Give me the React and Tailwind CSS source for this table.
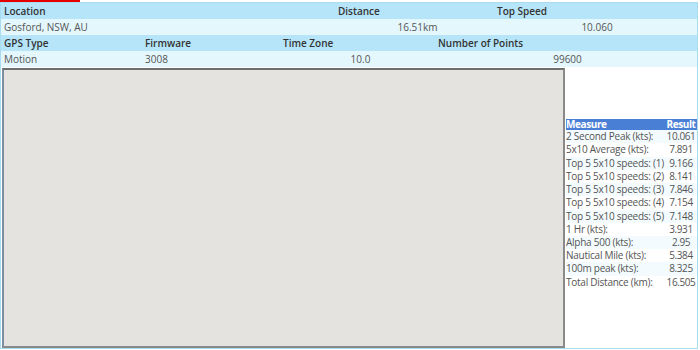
import React from "react";

const stats = [
  ["2 Second Peak (kts):", "10.061"],
  ["5x10 Average (kts):", "7.891"],
  ["Top 5 5x10 speeds: (1)", "9.166"],
  ["Top 5 5x10 speeds: (2)", "8.141"],
  ["Top 5 5x10 speeds: (3)", "7.846"],
  ["Top 5 5x10 speeds: (4)", "7.154"],
  ["Top 5 5x10 speeds: (5)", "7.148"],
  ["1 Hr (kts):", "3.931"],
  ["Alpha 500 (kts):", "2.95"],
  ["Nautical Mile (kts):", "5.384"],
  ["100m peak (kts):", "8.325"],
  ["Total Distance (km):", "16.505"],
];

const App = () => {
  return (
    <div
      className="w-[700px] h-[350px] bg-white text-[10px] overflow-hidden"
      style={{ fontFamily: '"Open Sans", sans-serif' }}
    >
      <div className="h-[2px] w-[80px] bg-[#e60000]" />
      <div className="w-[698px] h-[347px] border border-[#a9dcf0] flex flex-col">
        {/* session summary */}
        <div className="grid grid-cols-[337px_159px_1fr] h-[16px] leading-[16px] bg-[#b6e5f9] text-[#333] font-semibold">
          <div className="pl-[3px]">Location</div>
          <div>Distance</div>
          <div>Top Speed</div>
        </div>
        <div className="grid grid-cols-[337px_159px_1fr] h-[16px] leading-[16px] bg-[#e4f7fd] text-[#555]">
          <div className="pl-[3px]">Gosford, NSW, AU</div>
          <div className="text-center">16.51km</div>
          <div className="text-center">10.060</div>
        </div>
        <div className="grid grid-cols-[144px_138px_155px_1fr] h-[16px] leading-[16px] bg-[#b6e5f9] text-[#333] font-semibold">
          <div className="pl-[3px]">GPS Type</div>
          <div>Firmware</div>
          <div>Time Zone</div>
          <div>Number of Points</div>
        </div>
        <div className="grid grid-cols-[144px_138px_155px_1fr] h-[16px] leading-[16px] bg-[#e4f7fd] text-[#555]">
          <div className="pl-[3px]">Motion</div>
          <div>3008</div>
          <div className="text-center">10.0</div>
          <div className="text-center">99600</div>
        </div>

        <div className="flex flex-1 pt-px">
          {/* map placeholder */}
          <div className="w-[563px] shrink-0 ml-px bg-[#e5e3df] border-2 border-t-[#6e6e6e] border-l-[#7c8ea2] border-b-[#8a8a8a] border-r-[#8a8a8a]" />

          {/* measures */}
          <div className="flex-1 flex items-center pl-[1px] pb-[8px]">
            <table className="w-[131px] table-fixed border-collapse text-[#555] tracking-[-0.25px]">
              <colgroup>
                <col className="w-[99px]" />
                <col className="w-[32px]" />
              </colgroup>
              <thead>
                <tr className="bg-[#4a7fd6] text-white h-[11px] leading-[11px]">
                  <th className="text-left font-bold p-0 tracking-[-0.4px]">Measure</th>
                  <th className="text-center font-bold p-0 tracking-[-0.4px]">Result</th>
                </tr>
              </thead>
              <tbody>
                {stats.map(([label, value], i) => (
                  <tr
                    key={label}
                    className={`leading-[13.2px] ${i % 2 === 0 ? "bg-[#f3fbfe]" : "bg-white"}`}
                  >
                    <td className="p-0 whitespace-nowrap overflow-visible">{label}</td>
                    <td className="p-0 text-center tracking-[-0.4px]">{value}</td>
                  </tr>
                ))}
              </tbody>
            </table>
          </div>
        </div>
      </div>
    </div>
  );
};

export default App;
